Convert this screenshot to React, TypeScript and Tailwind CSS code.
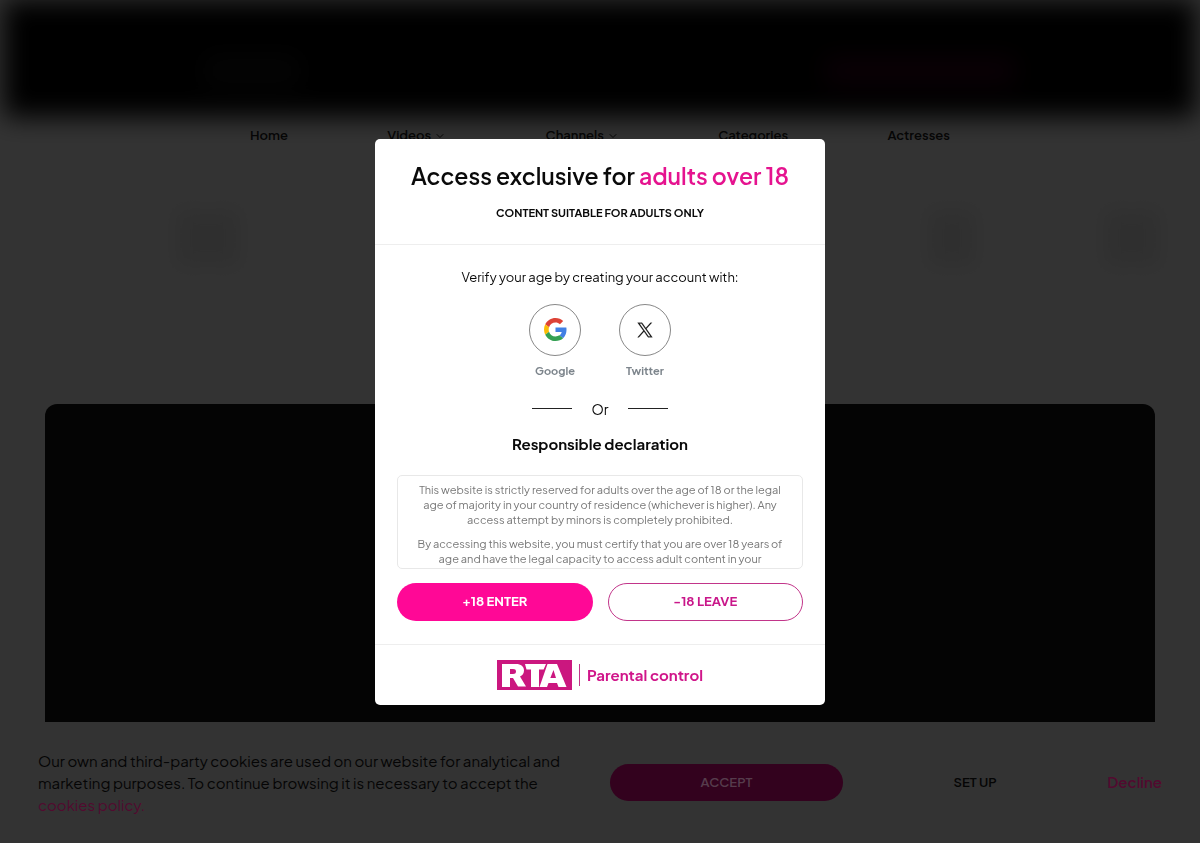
import { ChevronDown } from "lucide-react";

interface NavItem {
  label: string;
  menu?: boolean;
}

const NAV: NavItem[] = [
  { label: "Home" },
  { label: "Videos", menu: true },
  { label: "Channels", menu: true },
  { label: "Categories" },
  { label: "Actresses" },
];

function GoogleLogo() {
  return (
    <svg viewBox="0 0 48 48" className="h-[23px] w-[23px]" aria-hidden="true">
      <path fill="#dd4236" d="M24 9.500c3.540 0 6.710 1.220 9.210 3.600l6.850-6.850C35.900 2.380 30.470 0 24 0 14.620 0 6.510 5.380 2.560 13.220l7.980 6.190C12.430 13.720 17.740 9.500 24 9.500z" />
      <path fill="#4280e4" d="M46.980 24.550c0-1.570-.15-3.090-.38-4.550H24v9.020h12.940c-.58 2.960-2.260 5.480-4.780 7.180l7.730 6c4.510-4.180 7.090-10.360 7.090-17.650z" />
      <path fill="#fbbc05" d="M10.530 28.590c-.48-1.450-.76-2.990-.76-4.590s.27-3.140.76-4.590l-7.980-6.190C.92 16.460 0 20.120 0 24s.92 7.540 2.560 10.780z" />
      <path fill="#34a053" d="M24 48c6.480 0 11.930-2.130 15.890-5.810l-7.730-6c-2.150 1.450-4.920 2.300-8.160 2.300-6.260 0-11.570-4.220-13.470-9.910l-7.980 6.190C6.510 42.620 14.620 48 24 48z" />
    </svg>
  );
}

function XLogo() {
  return (
    <svg viewBox="0 0 24 24" className="h-4 w-4" fill="#0f0f0f" stroke="#0f0f0f" strokeWidth="0.400" aria-hidden="true">
      <path d="M14.1 10.3 22.3 1h-2l-7.1 8.1L7.6 1H1l8.6 12.2L1 23h2l7.5-8.6 6 8.6H23zm-2.7 3-.9-1.2L3.7 2.4h3l5.6 7.8.9 1.2 7.2 10.2h-3z" />
    </svg>
  );
}

function RtaLogo() {
  return (
    <svg viewBox="0 0 75 30" className="h-[30px] w-[75px]" role="img" aria-label="RTA">
      <rect width="75" height="30" fill="#cb177f" />
      <g fill="#fff">
        <path fillRule="evenodd" d="M5 4h14c5 0 8 2.500 8 6.500 0 3-1.500 5-4 6l6 10h-8l-5-8.500h-3V27H5zM13 9v5h3c2 0 3-.8 3-2.500S18 9 16 9z" />
        <path d="M28 4h21l-2.400 5.500H42V27h-8V9.500h-4.500z" />
        <path fillRule="evenodd" d="M50.500 4H60l9.500 23h-8l-1.500-4h-8.500L50 27h-7.500zM56.500 10l-3.200 8h5.700z" />
      </g>
    </svg>
  );
}

function Page() {
  return (
    <div>
      <header className="flex h-[117px] px-1">
        <div className="flex flex-1 items-center justify-between bg-black pt-6 pr-[180px] pl-[200px] blur-[13px]">
          <div className="h-8 w-24 bg-[#181818]" />
          <div className="h-7 w-48 bg-[#38021f]" />
        </div>
      </header>
      <nav className="flex h-[38px] items-center justify-between px-[250px] text-[13px] font-semibold text-[#222]">
        {NAV.map((item) => (
          <a key={item.label} href="#" className="flex items-center gap-[3px]">
            {item.label}
            {item.menu && <ChevronDown className="h-3 w-3" />}
          </a>
        ))}
      </nav>
      <div className="flex h-[249px] justify-between px-10 pt-[55px]">
        <div className="ml-[136px] h-14 w-16 bg-[#ebebeb] blur-[10px]" />
        <div className="flex gap-32">
          <div className="h-14 w-12 bg-[#ebebeb] blur-[10px]" />
          <div className="h-14 w-14 bg-[#ebebeb] blur-[10px]" />
        </div>
      </div>
      <main className="px-[45px]">
        <div className="h-[440px] rounded-xl bg-[#181818]" />
      </main>
    </div>
  );
}

function CookieBar() {
  return (
    <section aria-label="Cookies" className="fixed inset-x-0 bottom-0 flex h-[121px] items-center bg-[#333] px-[38px] text-[15px]">
      <p className="w-[532px] leading-[22px] text-[#050505]">
        Our own and third-party cookies are used on our website for analytical and marketing purposes. To continue
        browsing it is necessary to accept the{" "}
        <a href="#" className="text-[#520a2f]">cookies policy.</a>
      </p>
      <div className="ml-10 flex flex-1 items-center justify-between">
        <button type="button" className="h-[37px] w-[233px] rounded-full bg-[#33021e] text-[13px] font-semibold text-[#563c4c]">
          ACCEPT
        </button>
        <button type="button" className="text-[13px] font-semibold text-[#050505]">SET UP</button>
        <button type="button" className="font-semibold text-[#520a2f]">Decline</button>
      </div>
    </section>
  );
}

function AgeDialog() {
  return (
    <div role="dialog" aria-modal="true" aria-labelledby="age-title" className="w-[450px] rounded-[5px] bg-white text-center text-[#0a0a0a]">
      <header className="h-[106px] border-b border-[#eee] pt-[22px]">
        <h1 id="age-title" className="text-[23px] font-semibold leading-[30px]">
          Access exclusive for <span className="text-[#e5138f]">adults over 18</span>
        </h1>
        <p className="mt-[14px] text-[11px] font-bold leading-4">CONTENT SUITABLE FOR ADULTS ONLY</p>
      </header>

      <div className="px-[22px] pt-[22px] pb-[23px]">
        <p className="text-[13px] leading-5">Verify your age by creating your account with:</p>
        <div className="mt-[17px] flex justify-center gap-[38px] text-[11px] font-bold text-[#7d858c]">
          <button type="button" className="flex flex-col items-center">
            <span className="flex h-[52px] w-[52px] items-center justify-center rounded-full border border-[#888]">
              <GoogleLogo />
            </span>
            <span className="mt-[7px] leading-4">Google</span>
          </button>
          <button type="button" className="flex flex-col items-center">
            <span className="flex h-[52px] w-[52px] items-center justify-center rounded-full border border-[#888]">
              <XLogo />
            </span>
            <span className="mt-[7px] leading-4">Twitter</span>
          </button>
        </div>

        <div className="mt-5 flex items-center justify-center gap-[19px] text-[14px] leading-5">
          <span className="h-px w-10 bg-[#222]" />
          Or
          <span className="h-px w-10 bg-[#222]" />
        </div>

        <h2 className="mt-[14px] text-[15px] font-bold leading-[22px]">Responsible declaration</h2>
        <div className="mt-5 h-[94px] space-y-[9px] overflow-hidden rounded-[5px] border border-[#e8e8e8] px-3 pt-[6px] text-[11px] leading-[15px] text-[#777]">
          <p>
            This website is strictly reserved for adults over the age of 18 or the legal age of majority in your
            country of residence (whichever is higher). Any access attempt by minors is completely prohibited.
          </p>
          <p>
            By accessing this website, you must certify that you are over 18 years of age and have the legal capacity
            to access adult content in your
          </p>
        </div>

        <div className="mt-[14px] grid grid-cols-2 gap-[15px] text-[13px] font-bold">
          <button type="button" className="h-[38px] rounded-full bg-[#ff0896] text-white">+18 ENTER</button>
          <button type="button" className="h-[38px] rounded-full border border-[#c2358a] text-[#c9178a]">-18 LEAVE</button>
        </div>
      </div>

      <footer className="flex h-[61px] items-center justify-center gap-[7px] border-t border-[#eee]">
        <RtaLogo />
        <a href="#" className="border-l border-[#c2358a] pl-[7px] text-[15px] font-bold leading-[22px] text-[#d0168a]">
          Parental control
        </a>
      </footer>
    </div>
  );
}

export default function App() {
  return (
    <div className="h-screen overflow-hidden bg-white font-['Plus_Jakarta_Sans','Inter',sans-serif]">
      <Page />
      <div className="fixed inset-0 bg-black/80" />
      <CookieBar />
      <div className="fixed inset-0 flex items-center justify-center">
        <AgeDialog />
      </div>
    </div>
  );
}
